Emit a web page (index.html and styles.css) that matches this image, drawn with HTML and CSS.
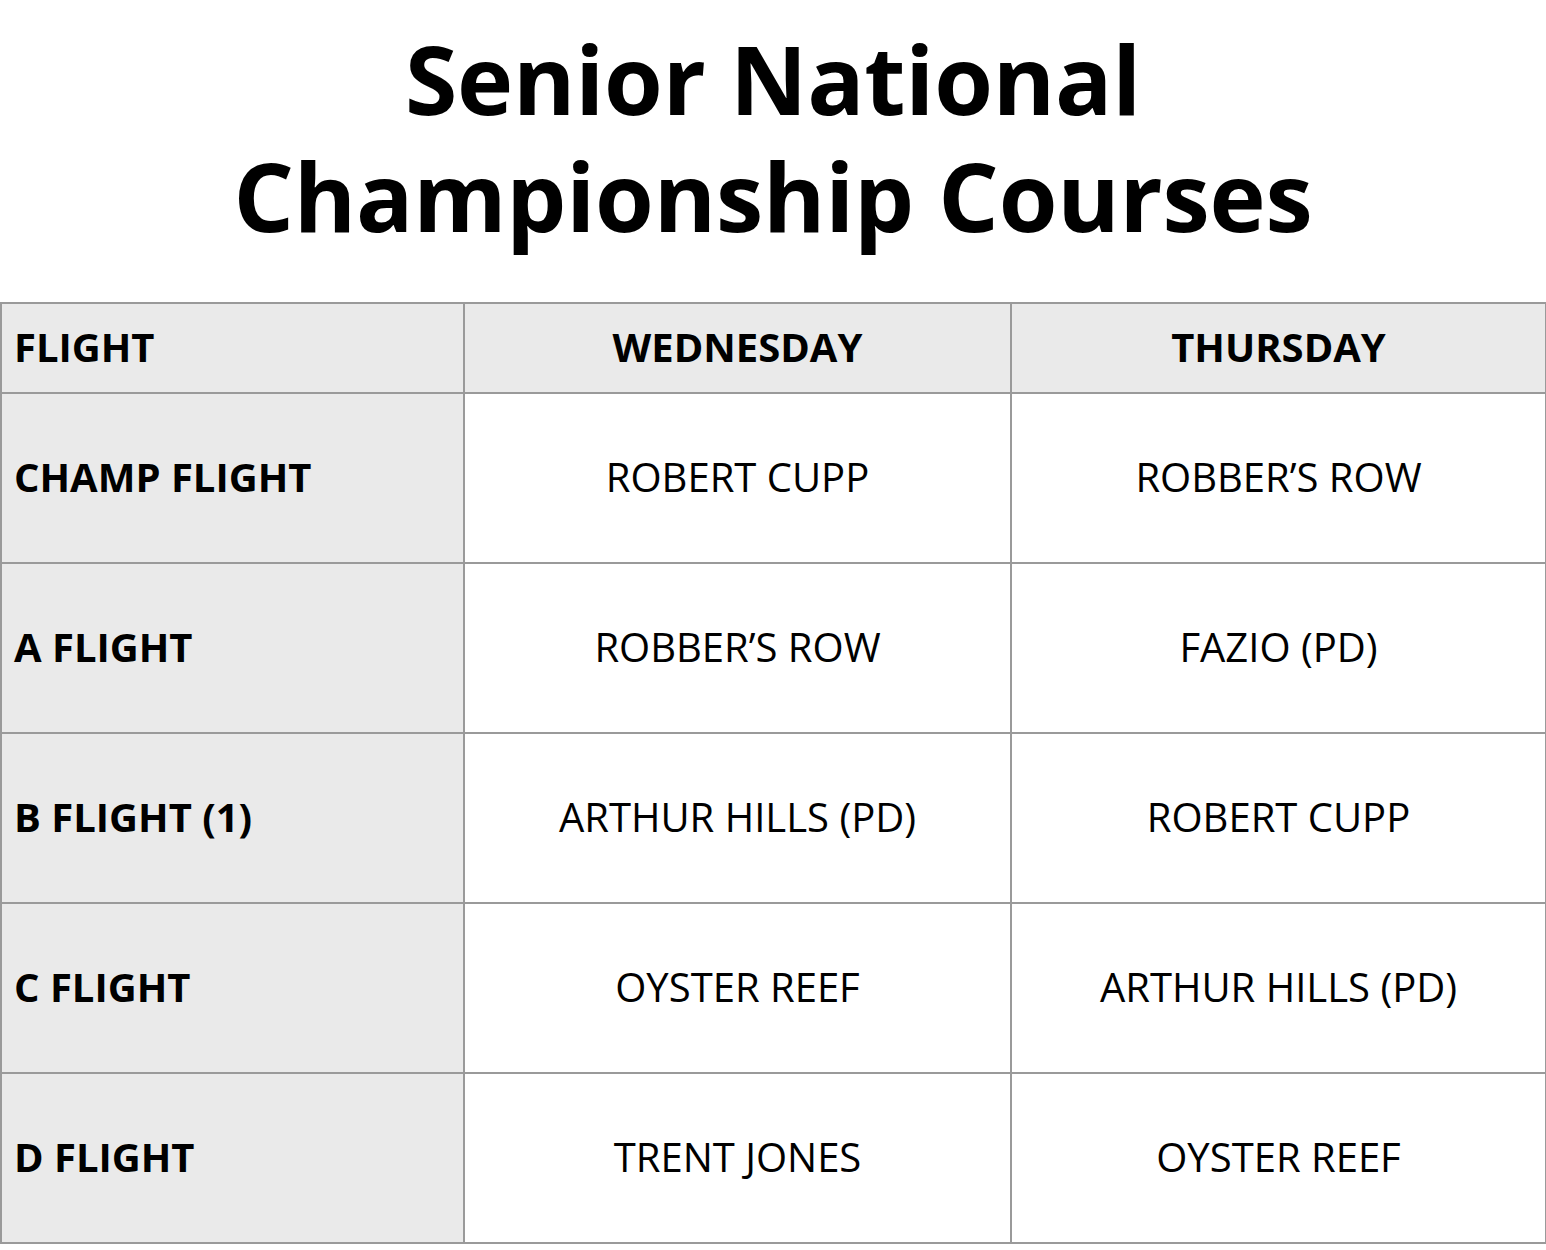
FILE: index.html
```html
<!DOCTYPE html>
<html lang="en">
<head>
<meta charset="utf-8">
<title>Senior National Championship Courses</title>
<link rel="stylesheet" href="styles.css">
</head>
<body>
<h1 class="title"><span class="line">Senior National</span><span class="line">Championship Courses</span></h1>
<table class="sched">
  <colgroup>
    <col class="c1"><col class="c2"><col class="c3">
  </colgroup>
  <thead>
    <tr class="head">
      <th class="flight">FLIGHT</th>
      <th>WEDNESDAY</th>
      <th>THURSDAY</th>
    </tr>
  </thead>
  <tbody>
    <tr><th class="flight">CHAMP FLIGHT</th><td>ROBERT CUPP</td><td>ROBBER’S ROW</td></tr>
    <tr><th class="flight">A FLIGHT</th><td>ROBBER’S ROW</td><td>FAZIO (PD)</td></tr>
    <tr><th class="flight">B FLIGHT (1)</th><td>ARTHUR HILLS (PD)</td><td>ROBERT CUPP</td></tr>
    <tr><th class="flight">C FLIGHT</th><td>OYSTER REEF</td><td>ARTHUR HILLS (PD)</td></tr>
    <tr><th class="flight">D FLIGHT</th><td>TRENT JONES</td><td>OYSTER REEF</td></tr>
  </tbody>
</table>
</body>
</html>
```
FILE: styles.css
```css
html, body {
  margin: 0;
  padding: 0;
  background: #ffffff;
}
body {
  font-family: "Open Sans", "Noto Sans", sans-serif;
  color: #000;
}
.title {
  margin: 0;
  padding-top: 20px;
  height: 302px;
  box-sizing: border-box;
  text-align: center;
  font-size: 95px;
  font-weight: 700;
  line-height: 117px;
  letter-spacing: -0.2px;
  display: flex;
  flex-direction: column;
  align-items: center;
}
.line {
  display: block;
  height: 117px;
}
.sched {
  width: 1545px;
  border-collapse: collapse;
  table-layout: fixed;
}
.c1 { width: 463px; }
.c2 { width: 547px; }
.c3 { width: 535px; }
.sched th, .sched td {
  border: 2px solid #9a9a9a;
  text-align: center;
  vertical-align: middle;
  font-size: 40px;
  padding: 0 0 3px 0;
}
.sched td {
  font-weight: 400;
  height: 165px;
}
.sched th {
  font-weight: 700;
}
.head th {
  background: #eaeaea;
  height: 85px;
}
.sched .flight {
  background: #eaeaea;
  text-align: left;
  padding-left: 12px;
}
```
